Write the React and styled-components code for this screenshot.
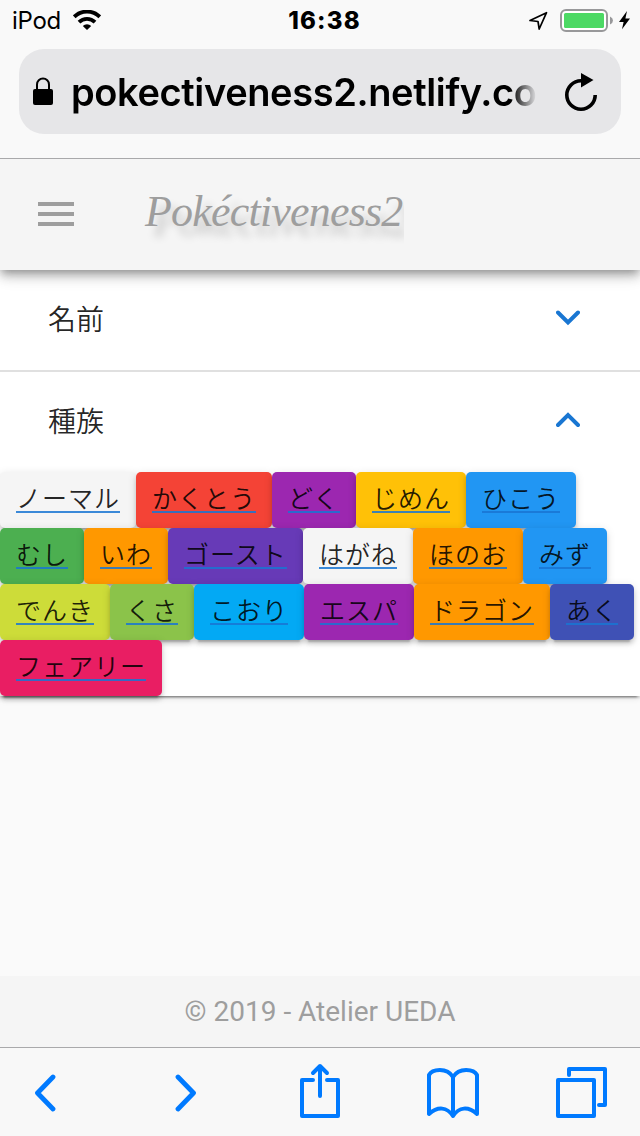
import React from 'react';
import styled, { createGlobalStyle } from 'styled-components';

const Global = createGlobalStyle`
  * { box-sizing: border-box; }
  body { margin: 0; background: #fafafa; }
`;

const Screen = styled.div`
  display: flex;
  flex-direction: column;
  width: 640px;
  height: 1136px;
  overflow: hidden;
  background: #fafafa;
  font-family: Roboto, "Noto Sans CJK JP", sans-serif;
`;

const BrowserTop = styled.header`
  position: relative;
  z-index: 3;
  flex: none;
  height: 159px;
  background: #f9f9f9;
  border-bottom: 1px solid #a9a9ab;
  font-family: Inter, sans-serif;
  color: #000;
`;

const StatusBar = styled.div`
  display: grid;
  grid-template-columns: 1fr auto 1fr;
  align-items: center;
  height: 40px;
  padding: 0 8px 0 12px;
`;

const Carrier = styled.div`
  display: flex;
  align-items: center;
  gap: 12px;
  font-size: 24px;
  letter-spacing: -0.3px;
`;

const Clock = styled.div`
  font-size: 24px;
  font-weight: 800;
  letter-spacing: 1.2px;
  padding-left: 5px;
`;

const StatusIcons = styled.div`
  display: flex;
  justify-content: flex-end;
`;

const AddressBar = styled.div`
  display: flex;
  align-items: center;
  height: 85px;
  margin: 9px 19px 0;
  padding: 0 22px 0 13px;
  border-radius: 25px;
  background: #e6e6e8;
`;

const Url = styled.div`
  flex: none;
  width: 476px;
  margin: 0 16px 0 17px;
  white-space: nowrap;
  font-size: 38px;
  line-height: 60px;
  font-weight: 600;
  letter-spacing: -0.38px;
  mask-image: linear-gradient(to right, #000 440px, transparent 466px);
`;

const AppBar = styled.div`
  position: relative;
  z-index: 2;
  flex: none;
  display: flex;
  align-items: center;
  gap: 70px;
  height: 111px;
  padding: 0 0 2px 38px;
  background: #f5f5f5;
  color: #9e9e9e;
  box-shadow: 0 4px 8px -2px rgba(0, 0, 0, 0.3), 0 8px 10px rgba(0, 0, 0, 0.14), 0 2px 20px rgba(0, 0, 0, 0.12);
`;

const Brand = styled.h1`
  margin: 0;
  padding: 0 1px 4px 1px;
  overflow: hidden;
  font: italic 400 44px/60px "Liberation Serif", serif;
  letter-spacing: -0.8px;
  text-shadow: 8px 10px 8px rgba(0, 0, 0, 0.2);
`;

const Panels = styled.main`
  flex: none;
  background: #fff;
  box-shadow: 0 4px 2px -3px rgba(0, 0, 0, 0.4), 0 2px 2px rgba(0, 0, 0, 0.14), 0 2px 6px rgba(0, 0, 0, 0.12);
`;

const PanelHeader = styled.div`
  display: flex;
  align-items: center;
  justify-content: space-between;
  height: ${(p) => p.$height}px;
  padding: 0 60px 4px 48px;
  border-bottom: ${(p) => (p.$divided ? '2px solid #e0e0e0' : '0')};
  font-size: 28px;
  font-family: "Noto Sans CJK JP", sans-serif;
  font-weight: 350;
  color: rgba(0, 0, 0, 0.87);
`;

const TypeList = styled.div`
  display: flex;
  flex-wrap: wrap;
`;

const TypeButton = styled.a`
  position: relative;
  width: ${(p) => p.$width}px;
  height: 56px;
  padding: 0 16px;
  border-radius: 5px;
  background: ${(p) => p.$color};
  box-shadow: 0 6px 2px -4px rgba(0, 0, 0, 0.2), 0 4px 4px rgba(0, 0, 0, 0.14), 0 2px 10px rgba(0, 0, 0, 0.12);
`;

const TypeLabel = styled.span`
  display: block;
  height: 41px;
  border-bottom: 2px solid rgba(25, 118, 210, 0.85);
  font: 350 25px/51px "Noto Sans CJK JP", sans-serif;
  letter-spacing: 1px;
  white-space: nowrap;
  color: rgba(0, 0, 0, 0.87);
`;

const Footer = styled.footer`
  flex: none;
  display: flex;
  align-items: center;
  justify-content: center;
  height: 71px;
  margin-top: auto;
  background: #f5f5f5;
  color: #9e9e9e;
  font-size: 28px;
`;

const Toolbar = styled.nav`
  flex: none;
  display: grid;
  grid-template-columns: 141px 124px 128px 130px 52px;
  align-items: center;
  height: 89px;
  padding-left: 33px;
  border-top: 1px solid #a9a9ab;
  background: #f8f8f8;
`;

const LineIcon = styled.svg`
  flex: none;
  display: block;
  fill: none;
  stroke: ${(p) => p.$color || '#007aff'};
  stroke-width: ${(p) => p.$weight || 4};
  stroke-linecap: round;
  stroke-linejoin: ${(p) => p.$join || 'round'};
`;

const types = [
  ['ノーマル', '#f5f5f5', 136],
  ['かくとう', '#f44336', 136],
  ['どく', '#9c27b0', 84],
  ['じめん', '#ffc107', 110],
  ['ひこう', '#2196f3', 110],
  ['むし', '#4caf50', 84],
  ['いわ', '#ff9800', 84],
  ['ゴースト', '#673ab7', 135],
  ['はがね', '#f5f5f5', 110],
  ['ほのお', '#ff9800', 110],
  ['みず', '#2196f3', 84],
  ['でんき', '#cddc39', 110],
  ['くさ', '#8bc34a', 84],
  ['こおり', '#03a9f4', 110],
  ['エスパ', '#9c27b0', 110],
  ['ドラゴン', '#ff9800', 136],
  ['あく', '#3f51b5', 84],
  ['フェアリー', '#e91e63', 162],
];

export default function App() {
  return (
    <Screen>
      <Global />
      <BrowserTop>
        <StatusBar>
          <Carrier>
            iPod
            <svg width="28" height="20" viewBox="0 0 28 20">
              <g fill="none" stroke="#000" strokeWidth="3.8">
                <path d="M1.2 6.8a18.2 18.2 0 0 1 25.6 0" />
                <path d="M6 12.2a11.4 11.4 0 0 1 16 0" />
              </g>
              <path d="M9.8 15.9a6 6 0 0 1 8.4 0L14 20z" />
            </svg>
          </Carrier>
          <Clock>16:38</Clock>
          <StatusIcons>
            <svg width="104" height="26" viewBox="528 7 104 26">
              <path d="M530 20.5 546.5 12.7 539.2 29 538 21.5z" fill="none" stroke="#000" strokeWidth="1.7" strokeLinejoin="round" />
              <rect x="561" y="10" width="46" height="21" rx="5" fill="#fff" stroke="#98989a" strokeWidth="2" />
              <rect x="564" y="13" width="40" height="15" rx="1.5" fill="#4cd964" />
              <path d="M610 16.5q3 1.5 3 4t-3 4z" fill="#98989a" />
              <path d="M627 11 619 22h4.6L622 29.3 630 18.5h-4.6z" />
            </svg>
          </StatusIcons>
        </StatusBar>
        <AddressBar>
          <svg width="22" height="30" viewBox="0 0 22 30">
            <rect x="1" y="12" width="20" height="16" rx="2" />
            <path d="M5 13V7.5a6 6 0 0 1 12 0V13" fill="none" stroke="#000" strokeWidth="2" />
          </svg>
          <Url>pokectiveness2.netlify.co</Url>
          <svg width="36" height="40" viewBox="563 72 36 40">
            <path d="M581 80.8a14.2 14.2 0 1 0 14.2 14.2" fill="none" stroke="#000" strokeWidth="3.6" />
            <path d="M581 73 593.5 80 581 87.5z" />
          </svg>
        </AddressBar>
      </BrowserTop>

      <AppBar>
        <svg width="36" height="24" viewBox="0 0 36 24" fill="#9e9e9e">
          <path d="M0 0h36v4H0zM0 10h36v4H0zM0 20h36v4H0z" />
        </svg>
        <Brand>Pokéctiveness2</Brand>
      </AppBar>

      <Panels>
        <PanelHeader $height={102} $divided>
          名前
          <LineIcon $color="#1976d2" $join="miter" width="24" height="16" viewBox="0 0 24 16">
            <path d="M2 2.500 12 12.500 22 2.500" />
          </LineIcon>
        </PanelHeader>
        <PanelHeader $height={100}>
          種族
          <LineIcon $color="#1976d2" $join="miter" width="24" height="16" viewBox="0 0 24 16">
            <path d="M2 13 12 3 22 13" />
          </LineIcon>
        </PanelHeader>
        <TypeList>
          {types.map(([name, color, width]) => (
            <TypeButton key={name} $color={color} $width={width}>
              <TypeLabel>{name}</TypeLabel>
            </TypeButton>
          ))}
        </TypeList>
      </Panels>

      <Footer>© 2019 - Atelier UEDA</Footer>

      <Toolbar>
        <LineIcon $weight={4.8} width="24" height="40" viewBox="33 1072 24 40">
          <path d="M53 1077 37.500 1093 53 1109" />
        </LineIcon>
        <LineIcon $weight={4.8} width="24" height="40" viewBox="174 1072 24 40">
          <path d="M178 1077 193.500 1093 178 1109" />
        </LineIcon>
        <LineIcon width="44" height="60" viewBox="298 1062 44 60">
          <path d="M313 1080h-11v36h36v-36h-11M320 1096v-30M313 1073l7-7 7 7" />
        </LineIcon>
        <LineIcon width="54" height="54" viewBox="426 1065 54 54">
          <path d="M453 1077v39C447 1107 438 1106 429 1114V1075C432 1069 447 1067 453 1077C459 1067 474 1069 477 1075V1114C468 1106 459 1107 453 1116" />
        </LineIcon>
        <LineIcon width="52" height="54" viewBox="556 1065 52 54">
          <path d="M558 1080h36v36h-36zM569 1075v-6h36v36h-6" />
        </LineIcon>
      </Toolbar>
    </Screen>
  );
}
